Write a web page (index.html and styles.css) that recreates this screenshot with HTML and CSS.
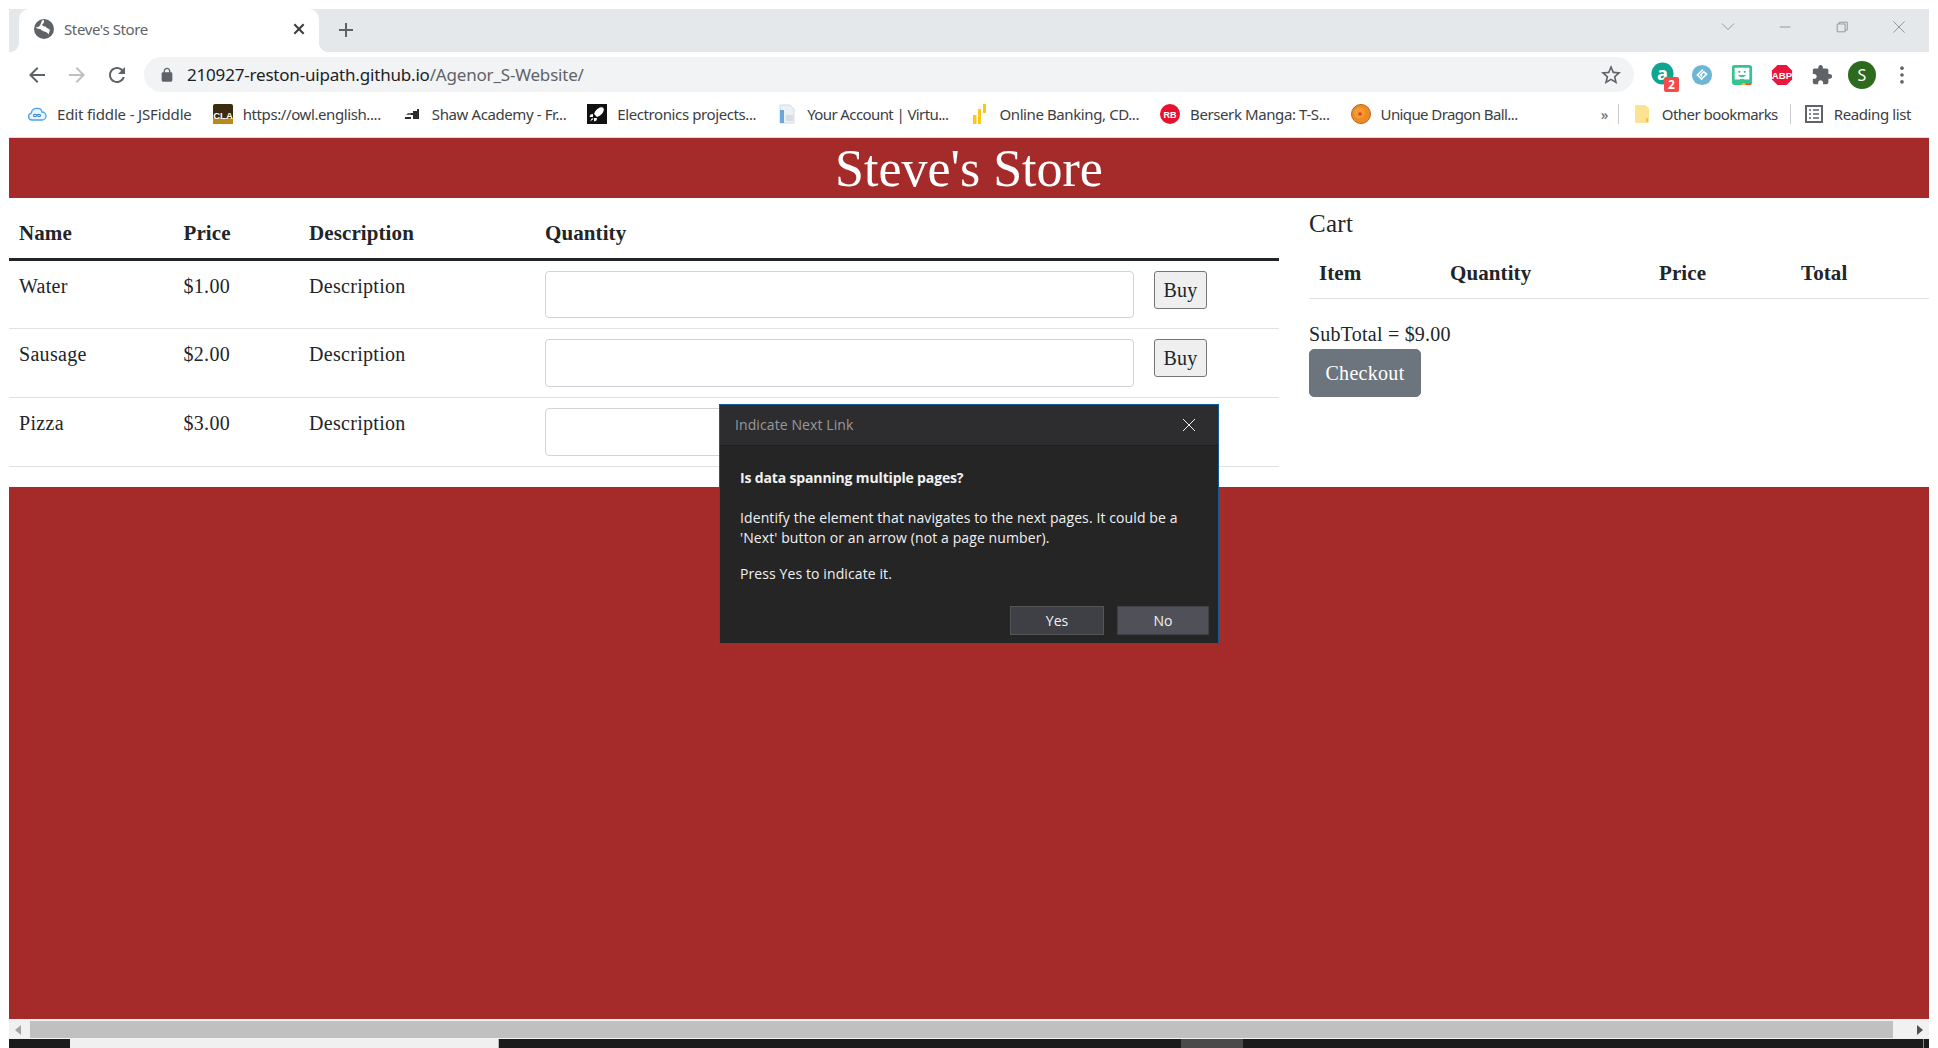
FILE: index.html
```html
<!DOCTYPE html>
<html lang="en">
<head>
<meta charset="utf-8">
<title>Steve's Store</title>
<link rel="stylesheet" href="styles.css">
</head>
<body>
<div class="window">
  <header class="chrome">
    <div class="tabstrip">
      <div class="tab">
        <svg class="tab-globe" viewBox="0 0 20 20"><circle cx="10" cy="10" r="10" fill="#5f6368"/><path d="M1.500 8.500c2.500 0 4-1 5-3l1.500-4 2-.5c.5 2-.5 3.500-2 4.500.5 1.500 2 2 3.500 2 1.500 2 3 2 4.500 3.500l-1.500 4.500c-1-1.700-2.200-2.500-3.700-2.700-1.300-1-3.300-1-4-2.500-1.500 0-4.300-1-5.800-2.300z" fill="#fff"/></svg>
        <span class="tab-title">Steve's Store</span>
        <svg class="tab-close" viewBox="0 0 12 12"><path d="M2 2l8 8M10 2l-8 8"/></svg>
      </div>
      <svg class="new-tab" viewBox="0 0 16 16"><path d="M8 1v14M1 8h14"/></svg>
      <div class="winctl">
        <span class="winbtn"><svg viewBox="0 0 16 10"><path d="M1 1l7 7 7-7"/></svg></span>
        <span class="winbtn"><svg viewBox="0 0 16 10"><path d="M2 5h12"/></svg></span>
        <span class="winbtn"><svg viewBox="0 0 16 16"><path d="M2.500 4.500h9v9h-9zM5 4.500V2.500h9v9h-2.500"/></svg></span>
        <span class="winbtn"><svg viewBox="0 0 16 16"><path d="M1.500 1.500l13 13M14.500 1.500l-13 13"/></svg></span>
      </div>
    </div>
    <div class="toolbar">
      <span class="navbtn"><svg viewBox="0 0 24 24" class="ic-dark"><path d="M20 11H7.830l5.590-5.590L12 4l-8 8 8 8 1.410-1.410L7.830 13H20v-2z"/></svg></span>
      <span class="navbtn"><svg viewBox="0 0 24 24" class="ic-off"><path d="M12 4l-1.410 1.410L16.170 11H4v2h12.170l-5.580 5.590L12 20l8-8z"/></svg></span>
      <span class="navbtn"><svg viewBox="0 0 24 24" class="ic-dark"><path d="M17.650 6.350C16.200 4.900 14.210 4 12 4c-4.420 0-7.990 3.580-7.990 8s3.570 8 7.990 8c3.730 0 6.840-2.550 7.730-6h-2.080c-.82 2.330-3.040 4-5.650 4-3.310 0-6-2.690-6-6s2.690-6 6-6c1.660 0 3.140.69 4.220 1.780L13 11h7V4l-2.350 2.350z"/></svg></span>
      <div class="omnibox">
        <svg class="lock" viewBox="0 0 24 24"><path d="M18 8h-1V6c0-2.760-2.240-5-5-5S7 3.240 7 6v2H6c-1.100 0-2 .9-2 2v10c0 1.100.9 2 2 2h12c1.100 0 2-.9 2-2V10c0-1.100-.9-2-2-2zM9 6c0-1.660 1.340-3 3-3s3 1.340 3 3v2H9V6z"/></svg>
        <span class="url"><span class="url-host">210927-reston-uipath.github.io</span>/Agenor_S-Website/</span>
        <svg class="star" viewBox="0 0 24 24"><path d="M22 9.240l-7.190-.62L12 2 9.190 8.630 2 9.240l5.460 4.730L5.820 21 12 17.270 18.180 21l-1.630-7.030L22 9.240zM12 15.400l-3.760 2.270 1-4.280-3.320-2.880 4.380-.38L12 6.100l1.710 4.040 4.380.38-3.320 2.880 1 4.280L12 15.400z"/></svg>
      </div>
      <div class="extensions">
        <span class="ext ext-a">
          <svg viewBox="0 0 24 24"><circle cx="12" cy="12" r="11.500" fill="#0fa58f"/><text x="12" y="18.500" class="ext-a-letter">a</text></svg>
          <span class="badge">2</span>
        </span>
        <span class="ext"><svg viewBox="0 0 24 24"><circle cx="12" cy="12" r="11" fill="#6eb6d4"/><path d="M13 6l-6 6 4.500 4.500 5.500-5.500-3-2.500-3.500 3.500 1.500 1.500" fill="none" stroke="#fff" stroke-width="1.700"/></svg></span>
        <span class="ext"><svg viewBox="0 0 24 24"><rect x="1" y="1" width="22" height="22" rx="3" fill="#35c48f"/><rect x="4" y="4" width="16" height="13" rx="1" fill="#fff"/><circle cx="9" cy="8.500" r="1.200" fill="#35c48f"/><circle cx="15" cy="8.500" r="1.200" fill="#35c48f"/><path d="M8 12c2 2.500 6 2.500 8 0M10 17h4l-2 2z" fill="#35c48f" stroke="#35c48f"/><path d="M12 21h4v2h-4z" fill="#f6c026"/><path d="M16 21h6v2h-6z" fill="#e9573f"/></svg></span>
        <span class="ext"><svg viewBox="0 0 24 24"><path d="M7 1h10l6 6v10l-6 6H7l-6-6V7z" fill="#e8173d"/><text x="12" y="16" class="ext-abp">ABP</text></svg></span>
        <span class="ext"><svg viewBox="0 0 24 24" class="ic-puzzle"><path d="M20.500 11H19V7c0-1.100-.9-2-2-2h-4V3.500C13 2.120 11.880 1 10.500 1S8 2.120 8 3.500V5H4c-1.100 0-1.990.9-1.990 2v3.800H3.500c1.490 0 2.700 1.210 2.700 2.700s-1.210 2.700-2.700 2.700H2V20c0 1.100.9 2 2 2h3.800v-1.500c0-1.490 1.210-2.700 2.700-2.700 1.490 0 2.700 1.210 2.700 2.700V22H17c1.100 0 2-.9 2-2v-4h1.500c1.380 0 2.500-1.120 2.500-2.500S21.880 11 20.500 11z"/></svg></span>
        <span class="ext"><span class="avatar">S</span></span>
        <span class="ext"><svg viewBox="0 0 24 24" class="ic-puzzle"><circle cx="12" cy="4.500" r="2"/><circle cx="12" cy="12" r="2"/><circle cx="12" cy="19.500" r="2"/></svg></span>
      </div>
    </div>
    <nav class="bookmarks">
      <a class="bm bm-first"><svg class="bm-ic" viewBox="0 0 20 20"><path d="M5 16a3.500 3.500 0 0 1-.7-6.900A5 5 0 0 1 10 4.500a4.500 4.500 0 0 1 5 3.500 4 4 0 0 1 0 8z" fill="#eaf4fe" stroke="#4aa3f0" stroke-width="1.300"/><path d="M10 11.500c-1-1.500-3.500-1.500-3.500 0s2.500 1.500 3.500 0 3.500-1.500 3.500 0-2.500 1.500-3.500 0z" fill="none" stroke="#3b8fe0" stroke-width="1.200"/></svg><span>Edit fiddle - JSFiddle</span></a>
      <a class="bm"><svg class="bm-ic" viewBox="0 0 20 20"><rect width="20" height="20" rx="2" fill="#3a2c10"/><rect y="14" width="20" height="6" fill="#b88a1c"/><text x="10" y="15" class="bm-cla">CLA</text></svg><span>https://owl.english....</span></a>
      <a class="bm"><svg class="bm-ic" viewBox="0 0 20 20"><path d="M3 15h6v-2H3zM11 15h6V5h-2v2h-4v2h-2v2h2z" fill="#2c2c2c"/><path d="M4 11h5V9H6z" fill="#666"/></svg><span>Shaw Academy - Fr...</span></a>
      <a class="bm"><svg class="bm-ic" viewBox="0 0 20 20"><rect width="20" height="20" fill="#111"/><path d="M15 3c-4 .5-6.500 3-8 7l3 3c4-1.500 6.500-4 7-8zM6 10l-2.500.5L2.500 13H6zM10 14l-.5 2.500L7 17.500V14zM5 14l-2 3.500L6.500 15z" fill="#fff"/></svg><span>Electronics projects...</span></a>
      <a class="bm bm-tight"><svg class="bm-ic" viewBox="0 0 20 20"><path d="M3 1h10l4 4v14H3z" fill="#edf1f6" stroke="#d3dae3"/><rect x="3" y="6" width="4" height="13" fill="#6aa8dc"/><rect x="9" y="11" width="7" height="6" fill="#d8dde4"/></svg><span>Your Account | Virtu...</span></a>
      <a class="bm"><svg class="bm-ic" viewBox="0 0 20 20"><path d="M4 11h3.500v9H4zM9 5h3v15H9zM14 0h3v9h-3z" fill="#fcc814"/></svg><span>Online Banking, CD...</span></a>
      <a class="bm"><svg class="bm-ic" viewBox="0 0 20 20"><circle cx="10" cy="10" r="10" fill="#e8112d"/><text x="10" y="13.500" class="bm-rb">RB</text></svg><span>Berserk Manga: T-S...</span></a>
      <a class="bm bm-tight"><svg class="bm-ic" viewBox="0 0 20 20"><circle cx="10" cy="10" r="9.500" fill="#ee8a24" stroke="#b9651a"/><circle cx="8.500" cy="9" r="5.500" fill="#f39a34"/><circle cx="9" cy="10" r="1.800" fill="#d8451c"/></svg><span>Unique Dragon Ball...</span></a>
      <span class="bm-more">»</span>
      <span class="bm-sep"></span>
      <a class="bm bm-tail"><svg class="bm-ic" viewBox="0 0 20 20"><path d="M3 2a1 1 0 0 1 1-1h9l4 3v14a1 1 0 0 1-1 1H4a1 1 0 0 1-1-1z" fill="#fde293"/><rect x="14" y="14" width="2" height="4" fill="#f3c34a"/></svg><span>Other bookmarks</span></a>
      <span class="bm-sep"></span>
      <a class="bm bm-last"><svg class="bm-ic" viewBox="0 0 20 20"><path d="M2 2h16v16H2z" fill="none" stroke="#5f6368" stroke-width="2"/><path d="M5 6h2M9 6h6M5 10h2M9 10h6M5 14h2M9 14h6" stroke="#5f6368" stroke-width="1.500"/></svg><span>Reading list</span></a>
    </nav>
  </header>

  <main class="page">
    <h1 class="hero">Steve's Store</h1>
    <div class="store">
      <section class="products">
        <table class="ptable">
          <colgroup><col class="c-name"><col class="c-price"><col class="c-desc"><col class="c-qty"><col class="c-buy"></colgroup>
          <thead><tr><th>Name</th><th>Price</th><th>Description</th><th>Quantity</th><th></th></tr></thead>
          <tbody>
            <tr class="first"><td>Water</td><td>$1.00</td><td>Description</td><td><input class="qty" type="text"></td><td><button class="buy">Buy</button></td></tr>
            <tr><td>Sausage</td><td>$2.00</td><td>Description</td><td><input class="qty" type="text"></td><td><button class="buy">Buy</button></td></tr>
            <tr><td>Pizza</td><td>$3.00</td><td>Description</td><td><input class="qty" type="text"></td><td><button class="buy">Buy</button></td></tr>
          </tbody>
        </table>
      </section>
      <aside class="cart">
        <h2 class="cart-title">Cart</h2>
        <table class="ctable">
          <colgroup><col class="cc-item"><col class="cc-qty"><col class="cc-price"><col class="cc-total"></colgroup>
          <thead><tr><th>Item</th><th>Quantity</th><th>Price</th><th>Total</th></tr></thead>
        </table>
        <div class="subtotal">SubTotal = $9.00</div>
        <button class="checkout">Checkout</button>
      </aside>
    </div>
    <div class="foot"></div>
  </main>

  <div class="scrollbar">
    <span class="arrow-left"></span>
    <span class="thumb"></span>
    <span class="arrow-right"></span>
  </div>
  <div class="taskbar">
    <span class="tb-start"></span>
    <span class="tb-search"></span>
    <span class="tb-app"></span>
    <span class="tb-clock">10:51 AM</span>
    <span class="tb-edge"></span>
  </div>

  <div class="dialog">
    <div class="dlg-head">
      <span>Indicate Next Link</span>
      <svg class="dlg-x" viewBox="0 0 14 14"><path d="M1 1l12 12M13 1L1 13"/></svg>
    </div>
    <div class="dlg-body">
      <p class="dlg-q">Is data spanning multiple pages?</p>
      <p class="dlg-p">Identify the element that navigates to the next pages. It could be a 'Next' button or an arrow (not a page number).</p>
      <p class="dlg-s">Press Yes to indicate it.</p>
      <div class="dlg-actions">
        <button class="dlg-btn yes">Yes</button>
        <button class="dlg-btn no">No</button>
      </div>
    </div>
  </div>
</div>
</body>
</html>
```
FILE: styles.css
```css
* { box-sizing: border-box; }
html, body { margin: 0; height: 100%; overflow: hidden; background: #fff; }
body { font-family: "Liberation Serif", serif; font-size: 20px; line-height: 30px; letter-spacing: .3px; color: #212529; }
.window { position: relative; height: 1048px; padding: 9px 9px 0; display: flex; flex-direction: column; }

/* browser chrome */
.chrome { font-family: "Noto Sans", "Open Sans", sans-serif; height: 129px; flex: none; display: flex; flex-direction: column; }
.tabstrip { height: 43px; background: #e5e8eb; display: flex; align-items: center; padding-left: 10px; flex: none; }
.tab { position: relative; align-self: stretch; width: 300px; background: #fff; border-radius: 10px 10px 0 0; display: flex; align-items: center; padding: 0 13px 3px 15px; }
.tab::before, .tab::after { content: ""; position: absolute; bottom: 0; width: 10px; height: 10px; }
.tab::before { left: -10px; background: radial-gradient(circle at 0 0, #e5e8eb 10px, #fff 10.5px); }
.tab::after { right: -10px; background: radial-gradient(circle at 100% 0, #e5e8eb 10px, #fff 10.5px); }
.tab-globe { width: 20px; height: 20px; flex: none; }
.tab-title { margin-left: 10px; font-size: 15px; color: #5f6368; letter-spacing: -.38px; flex: 1; }
.tab-close { width: 14px; height: 14px; stroke: #3c4043; stroke-width: 1.800; fill: none; flex: none; }
.new-tab { width: 16px; height: 16px; margin: 0 0 2px 19px; stroke: #5f6368; stroke-width: 2; fill: none; flex: none; }
.winctl { margin-left: auto; padding-right: 2px; align-self: flex-start; height: 36px; display: flex; }
.winbtn { width: 57px; display: flex; align-items: center; justify-content: center; }
.winbtn svg { width: 14px; height: 14px; stroke: #8a8d91; stroke-width: 1; fill: none; }

.toolbar { height: 45px; display: flex; align-items: center; padding-left: 8px; flex: none; background: #fff; letter-spacing: 0; }
.navbtn { width: 40px; height: 35px; display: flex; align-items: center; justify-content: center; flex: none; }
.navbtn svg { width: 24px; height: 24px; }
.ic-dark { fill: #5f6368; }
.ic-off { fill: #bcc0c4; }
.omnibox { margin-left: 7px; flex: 1; height: 35px; border-radius: 18px; background: #f1f3f4; display: flex; align-items: center; padding: 0 11px 0 15px; }
.lock { width: 16px; height: 16px; fill: #5f6368; flex: none; }
.url { margin-left: 12px; font-size: 17px; letter-spacing: -.19px; color: #5f6368; flex: 1; white-space: nowrap; }
.url-host { color: #202124; }
.star { width: 24px; height: 24px; fill: #5f6368; flex: none; }
.extensions { margin-left: 8px; padding-right: 7px; display: flex; flex: none; }
.ext { position: relative; width: 40px; height: 35px; display: flex; align-items: center; justify-content: center; }
.ext svg { width: 22px; height: 22px; }
.ext-a svg { width: 23px; height: 23px; transform: translateY(-1px); }
.ext-a-letter { font: 700 19px "Noto Sans", sans-serif; fill: #fff; text-anchor: middle; letter-spacing: 0; }
.ext-abp { font: 700 10.500px "Liberation Sans", sans-serif; fill: #fff; text-anchor: middle; letter-spacing: 0; }
.badge { position: absolute; left: 22px; top: 20px; width: 15px; height: 15px; border-radius: 2px; background: #f44a4a; color: #fff; font-size: 12px; font-weight: 700; line-height: 15px; text-align: center; }
.ic-puzzle { fill: #5f6368; }
.avatar { width: 28px; height: 28px; border-radius: 50%; background: #2e6a1e; color: #fff; font-size: 16px; line-height: 28px; text-align: center; }

.bookmarks { height: 41px; flex: none; display: flex; align-items: center; padding: 0 18px 7px; background: #fff; border-bottom: 1px solid #dadce0; }
.bm { display: flex; align-items: center; gap: 10px; margin-right: 21px; font-size: 15px; line-height: 20px; letter-spacing: -.4px; color: #3c4043; white-space: nowrap; }
.bm-first { letter-spacing: -.15px; }
.bm-tight { letter-spacing: -.6px; }
.bm-ic { width: 20px; height: 20px; flex: none; }
.bm-cla { font: 700 9.500px "Liberation Sans", sans-serif; fill: #fff; text-anchor: middle; letter-spacing: 0; }
.bm-rb { font: 700 9px "Liberation Sans", sans-serif; fill: #fff; text-anchor: middle; letter-spacing: 0; }
.bm-more { margin-left: auto; width: 17px; font-size: 15px; line-height: 20px; color: #5f6368; }
.bm-sep { width: 1px; height: 20px; background: #c8cacd; margin-right: 13px; }
.bm-tail { margin-right: 12px; letter-spacing: -.55px; }
.bm-last { margin-right: 0; }

/* store page */
.page { flex: 1; display: flex; flex-direction: column; min-height: 0; }
.hero { margin: 0; height: 60px; padding-top: 1px; background: #a52a2a; color: #fff; font-size: 52px; font-weight: 400; line-height: 60px; letter-spacing: 0; text-align: center; flex: none; }
.store { display: flex; gap: 30px; height: 289px; flex: none; }
.products { width: 1270px; flex: none; }
.cart { flex: 1; min-width: 0; }
table { border-collapse: separate; border-spacing: 0; width: 100%; table-layout: fixed; }
th, td { text-align: left; padding: 10px; }
th { font-size: 21px; font-weight: 700; letter-spacing: .1px; vertical-align: bottom; }
td { vertical-align: top; border-bottom: 1px solid #dee2e6; }
.ptable th { height: 63px; border-bottom: 3px solid #212529; }
.c-name { width: 164.500px; }
.c-price { width: 125.500px; }
.c-desc { width: 236px; }
.c-qty { width: 609px; }
.qty { display: block; width: 100%; height: 48px; border: 1px solid #ced4da; border-radius: 4px; background: #fff; }
.first .qty { height: 47px; }
.buy { display: block; height: 38px; width: 53px; padding: 0; font: 20px "Liberation Serif", serif; letter-spacing: .3px; color: #212529; background: #efefef; border: 1px solid #767676; border-radius: 3px; }
.cart-title { margin: 0 0 9px; padding-top: 11px; font-size: 25px; font-weight: 400; line-height: 30px; }
.ctable th { height: 51px; border-bottom: 1px solid #dee2e6; }
.cc-item { width: 131px; }
.cc-qty { width: 209px; }
.cc-price { width: 142px; }
.subtotal { margin-top: 20px; height: 30px; letter-spacing: .22px; }
.checkout { display: block; width: 112px; height: 48px; padding: 0; font: 20px "Liberation Serif", serif; letter-spacing: .3px; color: #fff; background: #6c757d; border: 1px solid #6c757d; border-radius: 5px; }
.foot { flex: 1; background: #a52a2a; }

/* bottom strips */
.scrollbar { height: 20px; flex: none; background: #f1f1f1; display: flex; align-items: center; padding-top: 1px; }
.arrow-left { width: 0; height: 0; margin-left: 6px; border: 5px solid transparent; border-right: 6px solid #a3a3a3; border-left: 0; flex: none; }
.thumb { flex: 1; height: 17px; margin: 0 24px 0 9px; background: #c0c0c0; }
.arrow-right { width: 0; height: 0; margin-right: 6px; border: 5px solid transparent; border-left: 6px solid #505050; border-right: 0; flex: none; }
.taskbar { height: 9px; flex: none; background: #1b1b1b; display: flex; overflow: hidden; color: #fff; font-family: "Noto Sans", sans-serif; letter-spacing: 0; }
.tb-start { width: 61px; flex: none; }
.tb-search { width: 429px; flex: none; background: #f0f0f0; border-right: 1px solid #b8b8b8; }
.tb-app { width: 62px; margin-left: 682px; flex: none; background: #4a4a4a; }
.tb-clock { margin-left: auto; margin-right: 70px; padding-top: 6px; font-size: 13px; line-height: 18px; white-space: nowrap; }
.tb-edge { width: 1px; margin-right: 5px; background: #8a8a8a; flex: none; }

/* dialog */
.dialog { position: absolute; left: 719px; top: 404px; width: 500px; height: 240px; border: 1px solid #0f5c9c; background: #252526; font-family: "Open Sans", "Noto Sans", sans-serif; color: #f1f1f1; font-size: 14px; line-height: 20px; letter-spacing: .1px; }
.dlg-head { height: 41px; background: #2d2d30; border-bottom: 1px solid #1e1e1e; display: flex; align-items: center; justify-content: space-between; padding: 0 22px 0 15px; color: #999; }
.dlg-x { width: 14px; height: 14px; stroke: #f1f1f1; stroke-width: 1; fill: none; }
.dlg-body { padding: 22px 9px 0 20px; }
.dlg-body p { margin: 0; }
.dlg-q { font-weight: 700; letter-spacing: -.15px; }
.dlg-body .dlg-p { margin-top: 20px; padding-right: 10px; }
.dlg-body .dlg-s { margin-top: 16px; }
.dlg-actions { display: flex; justify-content: flex-end; gap: 13px; margin-top: 22px; }
.dlg-btn { height: 29px; padding: 0; font: 14px "Open Sans", sans-serif; color: #f1f1f1; }
.yes { width: 94px; background: #3f3f46; border: 1px solid #555; }
.no { width: 92px; background: #505058; border: 1px solid #3f3f46; }
```
